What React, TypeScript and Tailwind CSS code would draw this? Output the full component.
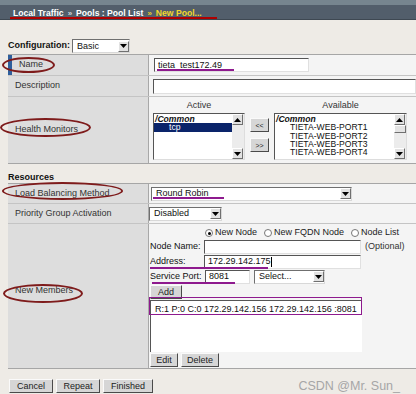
import React from 'react';

const Arrow = ({ up }: { up?: boolean }) => (
  <svg width="7" height="4" viewBox="0 0 7 4">
    <path d={up ? 'M0 4 L3.5 0 L7 4Z' : 'M0 0 L7 0 L3.5 4Z'} fill="#000" />
  </svg>
);

const ArrowBox = ({ up }: { up?: boolean }) => (
  <div className="w-[11px] h-[11px] shrink-0 bg-[#e2e2e2] border border-t-white border-l-white border-r-[#707070] border-b-[#707070] flex items-center justify-center">
    <Arrow up={up} />
  </div>
);

const Select = ({ value, className }: { value: string; className: string }) => (
  <div className={`flex items-center justify-between h-[14px] bg-white border border-t-[#6f6f6f] border-l-[#6f6f6f] border-r-[#d8d8d8] border-b-[#d8d8d8] ${className}`}>
    <span className="pl-[4px] leading-none">{value}</span>
    <ArrowBox />
  </div>
);

const Btn = ({ children, className = '' }: { children: React.ReactNode; className?: string }) => (
  <div className={`h-[14px] flex items-center justify-center bg-[#d6d6d6] border border-t-[#fafafa] border-l-[#fafafa] border-r-[#4a4a4a] border-b-[#4a4a4a] leading-none text-[#222] ${className}`}>
    {children}
  </div>
);

const Input = ({ value = '', className, caret }: { value?: string; className: string; caret?: boolean }) => (
  <div className={`flex items-center h-[14px] bg-white border border-t-[#555] border-l-[#555] border-r-[#e0e0e0] border-b-[#e0e0e0] ${className}`}>
    <span className="pl-[3px] leading-none">{value}</span>
    {caret && <span className="w-px h-[10px] bg-black" />}
  </div>
);

const Scrollbar = ({ thumb }: { thumb?: boolean }) => (
  <div className="w-[12px] h-full flex flex-col bg-[#ececec] bg-[radial-gradient(#cfcfcf_0.6px,transparent_0.7px)] bg-[length:2px_2px]">
    <ArrowBox up />
    {thumb && <div className="h-[8px] bg-[#e4e4e4] border border-t-white border-l-white border-r-[#707070] border-b-[#707070]" />}
    <div className="flex-1" />
    <ArrowBox />
  </div>
);

const Radio = ({ on }: { on?: boolean }) => (
  <span className="w-[8px] h-[8px] rounded-full bg-white border border-[#777] flex items-center justify-center">
    {on && <span className="w-[3px] h-[3px] rounded-full bg-black" />}
  </span>
);

const Label = ({ children, className = '' }: { children: React.ReactNode; className?: string }) => (
  <div className={`w-[141px] shrink-0 bg-[#dddddd] border-r border-[#a8a8a8] flex items-center pl-[7px] text-[#333] ${className}`}>
    {children}
  </div>
);

export default function App() {
  return (
    <div className="relative w-[416px] h-[394px] overflow-hidden bg-[#eeebe6] font-['Liberation_Sans',Arial,sans-serif] text-[9px] text-[#111]">
      {/* breadcrumb bar */}
      <div className="h-[5px] bg-[#76858f]" />
      <div className="h-[15px] bg-[#525e6b] border-b border-[#3e4852] flex items-center pl-[13px] pt-[3px] font-bold text-[8.6px] text-white">
        <span>Local Traffic</span>
        <span className="mx-[4px] text-[8px] text-[#cfd6dc]">»</span>
        <span>Pools : Pool List</span>
        <span className="mx-[4px] text-[8px] text-[#e8cc2a]">»</span>
        <span className="text-[#f2d72a]">New Pool...</span>
      </div>

      {/* configuration */}
      <div className="mt-[20px] h-[12px] flex items-center pl-[8px]">
        <span className="font-bold w-[64px]">Configuration:</span>
        <Select value="Basic" className="w-[58px] h-[13px]" />
      </div>

      {/* general table */}
      <div className="mt-[2px] ml-[8px] border-t border-[#a6a6a6] bg-[#f4f4f4]">
        <div className="flex h-[21px] border-b border-[#c4c4c4]">
          <Label className="pl-[11px] relative">
            <span className="absolute left-0 top-0 bottom-0 w-[4px] bg-[#2f5f9c]" />
            Name
          </Label>
          <div className="flex items-center pl-[5px]">
            <Input value="tieta_test172.49" className="w-[155px]" />
          </div>
        </div>
        <div className="flex h-[21px] border-b border-[#c4c4c4]">
          <Label>Description</Label>
          <div className="flex items-center pl-[4px] flex-1">
            <Input className="flex-1 h-[15px]" />
          </div>
        </div>
        <div className="flex h-[67px] border-b border-[#a6a6a6]">
          <Label>Health Monitors</Label>
          <div className="pl-[4px] pt-[3px] flex gap-[5px]">
            <div className="flex flex-col items-center">
              <span className="h-[10px] leading-[10px] text-[#333]">Active</span>
              <div className="mt-[3px] w-[92px] h-[47px] bg-white border border-t-[#555] border-l-[#555] border-r-[#ddd] border-b-[#ddd] flex">
                <div className="flex-1 text-[8.6px] leading-[8.3px] pt-[1px]">
                  <div className="font-bold italic pl-[1px]">/Common</div>
                  <div className="bg-[#0a246a] text-white pl-[15px] h-[8.3px]">tcp</div>
                </div>
                <Scrollbar />
              </div>
            </div>
            <div className="flex flex-col gap-[6px] pt-[18px]">
              <Btn className="w-[19px] h-[13px] text-[7px]">&lt;&lt;</Btn>
              <Btn className="w-[19px] h-[13px] text-[7px]">&gt;&gt;</Btn>
            </div>
            <div className="flex flex-col items-center">
              <span className="h-[10px] leading-[10px] text-[#333]">Available</span>
              <div className="mt-[3px] w-[133px] h-[47px] bg-white border border-t-[#555] border-l-[#555] border-r-[#ddd] border-b-[#ddd] flex">
                <div className="flex-1 text-[8.6px] leading-[8.3px] pt-[1px]">
                  <div className="font-bold italic pl-[1px]">/Common</div>
                  <div className="pl-[15px]">TIETA-WEB-PORT1</div>
                  <div className="pl-[15px]">TIETA-WEB-PORT2</div>
                  <div className="pl-[15px]">TIETA-WEB-PORT3</div>
                  <div className="pl-[15px]">TIETA-WEB-PORT4</div>
                </div>
                <Scrollbar thumb />
              </div>
            </div>
          </div>
        </div>
      </div>

      {/* resources */}
      <div className="mt-[8px] h-[10px] pl-[8px] font-bold leading-[10px]">Resources</div>
      <div className="mt-[1px] ml-[8px] border-t border-[#a6a6a6] bg-[#f4f4f4]">
        <div className="flex h-[20px] border-b border-[#c4c4c4]">
          <Label>Load Balancing Method</Label>
          <div className="flex items-center pl-[2px]">
            <Select value="Round Robin" className="w-[201px]" />
          </div>
        </div>
        <div className="flex h-[20px] border-b border-[#c4c4c4]">
          <Label>Priority Group Activation</Label>
          <div className="flex items-center">
            <Select value="Disabled" className="w-[73px]" />
          </div>
        </div>
        <div className="flex h-[145px] border-b border-[#a6a6a6]">
          <Label className="pb-[10px]">New Members</Label>
          <div className="pl-[1px] pt-[3px] flex flex-col">
            <div className="h-[12px] flex items-center gap-[2px] pl-[55px] text-[#222]">
              <Radio on /> <span className="mr-[5px]">New Node</span>
              <Radio /> <span className="mr-[5px]">New FQDN Node</span>
              <Radio /> <span>Node List</span>
            </div>
            <div className="h-[15px] flex items-center">
              <span className="w-[54px]">Node Name:</span>
              <Input className="w-[157px] h-[13px]" />
              <span className="ml-[4px] text-[#333]">(Optional)</span>
            </div>
            <div className="h-[15px] flex items-center">
              <span className="w-[54px]">Address:</span>
              <Input value="172.29.142.175" caret className="w-[157px] h-[13px]" />
            </div>
            <div className="h-[15px] flex items-center">
              <span className="w-[55px]">Service Port:</span>
              <Input value="8081" className="w-[45px] h-[13px]" />
              <Select value="Select..." className="ml-[4px] w-[71px] h-[13px]" />
            </div>
            <Btn className="w-[32px] h-[13px] mt-[1px]">Add</Btn>
            <div className="mt-[1px] w-[212px] h-[52px] bg-white border-l border-t border-[#555] pl-[4px] pt-[4px] leading-none">
              R:1 P:0 C:0 172.29.142.156 172.29.142.156 :8081
            </div>
            <div className="flex gap-[3px] mt-[1px]">
              <Btn className="w-[28px] h-[13px]">Edit</Btn>
              <Btn className="w-[38px] h-[13px]">Delete</Btn>
            </div>
          </div>
        </div>
      </div>

      {/* bottom buttons */}
      <div className="mt-[8px] pl-[9px] flex items-center gap-[3px]">
        <Btn className="w-[44px]">Cancel</Btn>
        <Btn className="w-[44px]">Repeat</Btn>
        <Btn className="w-[50px]">Finished</Btn>
        <span className="ml-auto mr-[16px] text-[12.5px] text-[#a6a6a6]">CSDN @Mr. Sun_</span>
      </div>

      {/* annotations */}
      <div className="absolute left-[10px] top-[17px] w-[207px] h-[2px] bg-[#b00000]" />
      <div className="absolute left-[2px] top-[57px] w-[53px] h-[16px] rounded-[50%] border-2 border-[#7e1b1b]" />
      <div className="absolute left-0 top-[118px] w-[91px] h-[19px] rounded-[50%] border-2 border-[#7e1b1b]" />
      <div className="absolute left-[2px] top-[182px] w-[121px] h-[18px] rounded-[50%] border-2 border-[#7e1b1b]" />
      <div className="absolute left-[3px] top-[284px] w-[80px] h-[19px] rounded-[50%] border-2 border-[#7e1b1b]" />
      <div className="absolute left-[157px] top-[69px] w-[77px] h-[1.5px] bg-[#8e1a8e]" />
      <div className="absolute left-[153px] top-[197px] w-[71px] h-[1.5px] bg-[#8e1a8e]" />
      <div className="absolute left-[150px] top-[267px] w-[118px] h-[1.5px] bg-[#8e1a8e]" />
      <div className="absolute left-[152px] top-[282px] w-[83px] h-[1.5px] bg-[#8e1a8e]" />
      <div className="absolute left-[149px] top-[297px] w-[213px] h-[18px] border-[1.5px] border-[#8e1a8e]" />
    </div>
  );
}
